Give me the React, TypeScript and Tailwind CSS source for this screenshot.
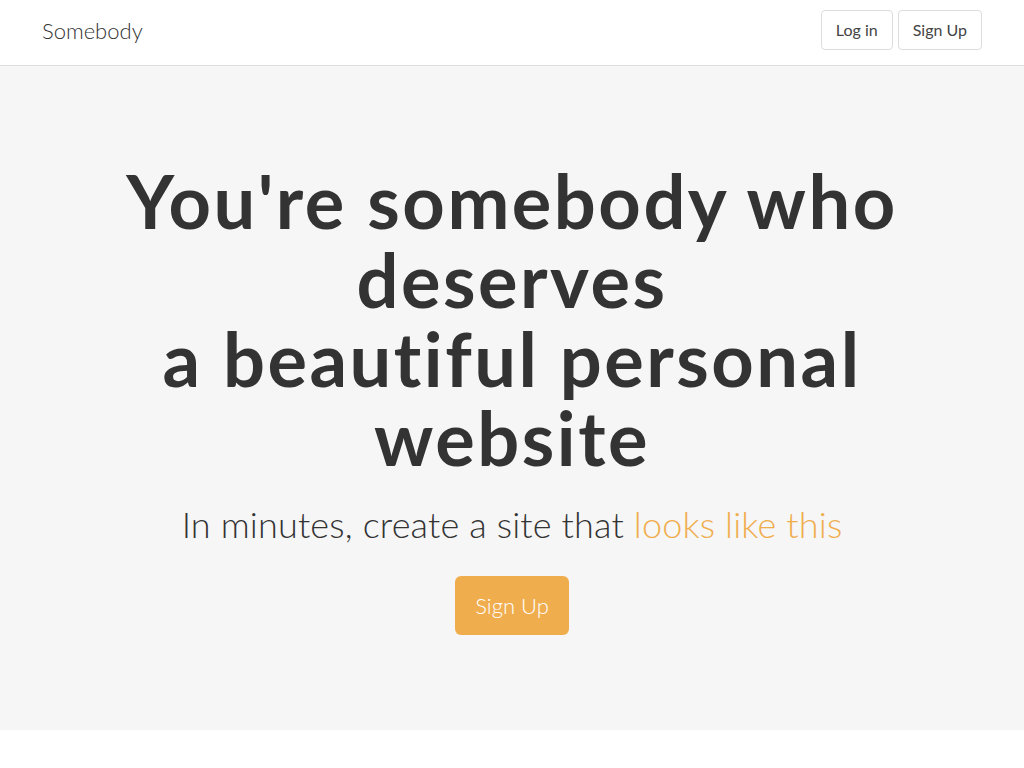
export default function App() {
  return (
    <div className="min-h-screen bg-white text-[#333]" style={{ fontFamily: 'Lato, "Open Sans", sans-serif' }}>
      {/* Navbar */}
      <nav className="h-[66px] border-b border-[#ddd] bg-white flex items-center justify-between pl-[42px] pr-[42px]">
        <span className="text-[22px] font-light text-[#333] -mt-[4px]">Somebody</span>
        <div className="flex items-center gap-[5px] -mt-[6px]">
          <button className="h-[40px] px-[14px] border border-[#ddd] rounded-[4px] bg-white text-[16px] text-[#444]">
            Log in
          </button>
          <button className="h-[40px] px-[14px] border border-[#ddd] rounded-[4px] bg-white text-[16px] text-[#444]">
            Sign Up
          </button>
        </div>
      </nav>

      {/* Hero */}
      <section className="h-[664px] bg-[#f6f6f6] flex flex-col items-center pt-[95px]">
        <h1 className="text-[74px] font-bold leading-[79px] tracking-[2.5px] text-center text-[#333]">
          <span className="block whitespace-nowrap">You're somebody who</span>
          <span className="block whitespace-nowrap">deserves</span>
          <span className="block whitespace-nowrap">a beautiful personal</span>
          <span className="block whitespace-nowrap">website</span>
        </h1>
        <p className="mt-[20px] text-[36px] font-light text-[#333] text-center tracking-[0.15px]">
          In minutes, create a site that <span className="text-[#f0ad4e]">looks like this</span>
        </p>
        <button className="mt-[25px] h-[59px] px-[20px] rounded-[6px] bg-[#f0ad4e] text-white text-[22px] font-light">
          Sign Up
        </button>
      </section>
    </div>
  );
}
